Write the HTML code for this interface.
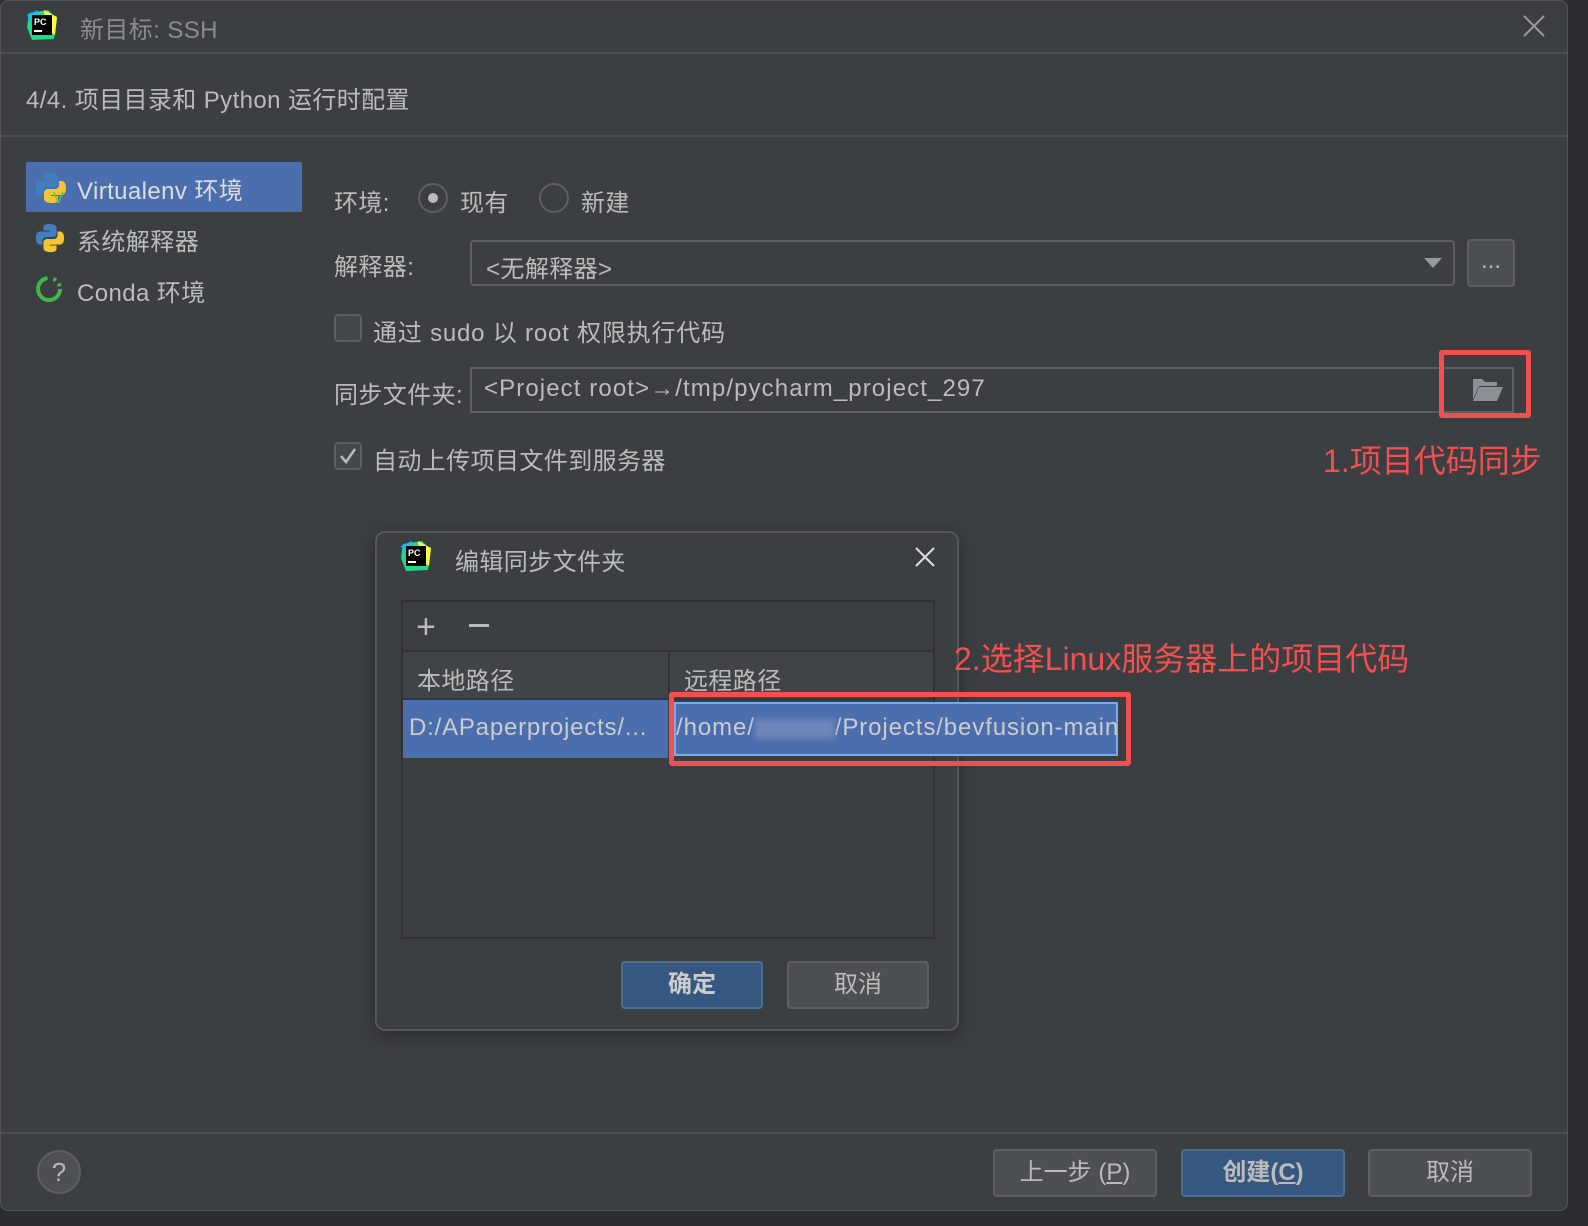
<!DOCTYPE html>
<html><head><meta charset="utf-8"><style>
*{margin:0;padding:0;box-sizing:border-box}
body{width:1588px;height:1226px;background:#2b2d30;font-family:"Liberation Sans","Noto Sans CJK SC",sans-serif;color:#bbbbbb;position:relative;overflow:hidden}
.a{position:absolute}
.win{left:0;top:0;width:1568px;height:1211px;background:#3c3f41;border:1px solid #555;border-radius:8px}
.t{font-size:24px;white-space:nowrap;letter-spacing:0.4px}
.btn{position:absolute;border:2px solid #5e6060;background:#4c5052;border-radius:4px;font-size:24px;text-align:center;color:#bbb}
</style></head><body>
<div class="a win"></div>
<svg class="a" style="left:26px;top:9px" width="32" height="32" viewBox="0 0 32 32"><polygon points="3,4 22,1 31,10 28,30 6,31 1,18" fill="#21d789"/><polygon points="18,1 31,8 29,26 20,20" fill="#fcf84a"/><polygon points="1,6 12,1 8,20" fill="#07c3f2"/><rect x="6" y="6" width="20" height="20" fill="#000"/><text x="8" y="16" font-size="9" font-weight="bold" fill="#fff" font-family="Liberation Sans">PC</text><rect x="8" y="21" width="8" height="2" fill="#fff"/></svg>
<div class="a t" style="left:80px;top:10px;color:#8a8c8e">新目标: SSH</div>
<svg class="a" style="left:1522px;top:14px" width="24" height="24"><path d="M2 2L22 22M22 2L2 22" stroke="#999" stroke-width="2"/></svg>
<div class="a" style="left:1px;top:52px;width:1566px;height:2px;background:#4b4e50"></div>
<div class="a t" style="left:26px;top:80px;color:#bbb">4/4. 项目目录和 Python 运行时配置</div>
<div class="a" style="left:1px;top:135px;width:1566px;height:2px;background:#4b4e50"></div>
<div class="a" style="left:26px;top:162px;width:276px;height:50px;background:#4b6eaf"></div>
<svg class="a" style="left:35px;top:172px" width="32" height="32" viewBox="0 0 32 32"><path d="M15 1c-6 0-6 3-6 3v4h7v1H5s-4 0-4 7 4 7 4 7h3v-4s0-4 4-4h7s4 0 4-4V5s0-4-8-4z" fill="#3f7fbd"/><path d="M17 31c6 0 6-3 6-3v-4h-7v-1h11s4 0 4-7-4-7-4-7h-3v4s0 4-4 4h-7s-4 0-4 4v6s0 4 8 4z" fill="#f2c531"/><text x="18" y="31" font-size="16" fill="#6cc24a" font-family="Liberation Sans">V</text></svg>
<div class="a t" style="left:77px;top:171px;color:#ddd">Virtualenv 环境</div>
<svg class="a" style="left:35px;top:223px" width="30" height="30" viewBox="0 0 32 32"><path d="M15 1c-6 0-6 3-6 3v4h7v1H5s-4 0-4 7 4 7 4 7h3v-4s0-4 4-4h7s4 0 4-4V5s0-4-8-4z" fill="#3f7fbd"/><path d="M17 31c6 0 6-3 6-3v-4h-7v-1h11s4 0 4-7-4-7-4-7h-3v4s0 4-4 4h-7s-4 0-4 4v6s0 4 8 4z" fill="#f2c531"/></svg>
<div class="a t" style="left:77px;top:222px">系统解释器</div>
<svg class="a" style="left:35px;top:275px" width="30" height="30"><circle cx="14" cy="14" r="11" fill="none" stroke="#44b549" stroke-width="4" stroke-dasharray="50 6 3 4 3 4"/></svg>
<div class="a t" style="left:77px;top:273px">Conda 环境</div>
<div class="a t" style="left:334px;top:183px">环境:</div>
<div class="a" style="left:418px;top:183px;width:30px;height:30px;border:2px solid #5e6060;border-radius:50%;background:#3c3f41"></div>
<div class="a" style="left:428px;top:193px;width:10px;height:10px;border-radius:50%;background:#bbb"></div>
<div class="a t" style="left:460px;top:183px">现有</div>
<div class="a" style="left:539px;top:183px;width:30px;height:30px;border:2px solid #5e6060;border-radius:50%"></div>
<div class="a t" style="left:581px;top:183px">新建</div>
<div class="a t" style="left:334px;top:247px">解释器:</div>
<div class="a" style="left:470px;top:240px;width:985px;height:46px;border:2px solid #5e6060;border-radius:4px"></div>
<div class="a t" style="left:486px;top:249px">&lt;无解释器&gt;</div>
<div class="a" style="left:1424px;top:258px;border-left:9px solid transparent;border-right:9px solid transparent;border-top:10px solid #999"></div>
<div class="btn" style="left:1467px;top:239px;width:48px;height:48px;line-height:40px">...</div>
<div class="a" style="left:334px;top:314px;width:28px;height:28px;border:2px solid #5e6060;border-radius:4px;background:#43494a"></div>
<div class="a t" style="left:373px;top:313px;letter-spacing:0.8px">通过 sudo 以 root 权限执行代码</div>
<div class="a t" style="left:334px;top:375px">同步文件夹:</div>
<div class="a" style="left:470px;top:367px;width:1044px;height:46px;border:2px solid #5e6060"></div>
<div class="a t" style="left:484px;top:375px;letter-spacing:1.1px">&lt;Project root&gt;→/tmp/pycharm_project_297</div>
<svg class="a" style="left:1471px;top:377px" width="32" height="26"><path d="M2 2h9l3 3h12v4H8L2 22z" fill="#8b9096"/><path d="M8 10h24l-6 14H2z" fill="#8b9096"/></svg>
<div class="a" style="left:1439px;top:350px;width:92px;height:68px;border:5px solid #f44f50;border-radius:3px"></div>
<div class="a" style="left:1323px;top:436px;font-size:32px;color:#f44f50;white-space:nowrap">1.项目代码同步</div>
<div class="a" style="left:334px;top:442px;width:28px;height:28px;border:2px solid #5e6060;border-radius:4px;background:#43494a"></div>
<svg class="a" style="left:338px;top:446px" width="20" height="20"><path d="M3 10l5 6L17 3" fill="none" stroke="#bbb" stroke-width="2.5"/></svg>
<div class="a t" style="left:373px;top:441px">自动上传项目文件到服务器</div>
<div class="a" style="left:375px;top:531px;width:584px;height:500px;background:#3c3f41;border:2px solid #55585a;border-radius:10px;box-shadow:0 4px 16px rgba(0,0,0,.35)"></div>
<svg class="a" style="left:400px;top:540px" width="32" height="32" viewBox="0 0 32 32"><polygon points="3,4 22,1 31,10 28,30 6,31 1,18" fill="#21d789"/><polygon points="18,1 31,8 29,26 20,20" fill="#fcf84a"/><polygon points="1,6 12,1 8,20" fill="#07c3f2"/><rect x="6" y="6" width="20" height="20" fill="#000"/><text x="8" y="16" font-size="9" font-weight="bold" fill="#fff" font-family="Liberation Sans">PC</text><rect x="8" y="21" width="8" height="2" fill="#fff"/></svg>
<div class="a t" style="left:455px;top:542px">编辑同步文件夹</div>
<svg class="a" style="left:914px;top:546px" width="22" height="22"><path d="M2 2L20 20M20 2L2 20" stroke="#ddd" stroke-width="2"/></svg>
<div class="a" style="left:401px;top:600px;width:534px;height:339px;border:2px solid #2f3133;background:#3c3f41"></div>
<div class="a" style="left:403px;top:650px;width:530px;height:2px;background:#323436"></div>
<div class="a" style="left:403px;top:652px;width:530px;height:46px;background:#414446"></div>
<div class="a" style="left:668px;top:652px;width:2px;height:46px;background:#323436"></div>
<div class="a" style="left:403px;top:698px;width:530px;height:2px;background:#323436"></div>
<div class="a" style="left:416px;top:608px;font-size:34px;color:#bbb">+</div>
<div class="a" style="left:469px;top:624px;width:20px;height:3px;background:#bbb"></div>
<div class="a t" style="left:417px;top:661px">本地路径</div>
<div class="a t" style="left:684px;top:661px">远程路径</div>
<div class="a" style="left:403px;top:700px;width:265px;height:58px;background:#4b6eaf"></div>
<div class="a t" style="left:409px;top:714px;color:#ccc;letter-spacing:0.8px">D:/APaperprojects/...</div>
<div class="a" style="left:674px;top:702px;width:444px;height:54px;border:2px solid #77aaef;background:#4b6eaf"></div>
<div class="a t" style="left:676px;top:714px;color:#ccc;letter-spacing:0.9px">/home/<span style="display:inline-block;width:80px;height:20px;background:#6e86b8;filter:blur(3px);vertical-align:middle"></span>/Projects/bevfusion-main</div>
<div class="a" style="left:669px;top:692px;width:462px;height:74px;border:5px solid #f44f50;border-radius:3px"></div>
<div class="a" style="left:954px;top:634px;font-size:32px;color:#f44f50;white-space:nowrap">2.选择Linux服务器上的项目代码</div>
<div class="btn" style="left:621px;top:961px;width:142px;height:48px;line-height:44px;background:#365880;border-color:#4c708c;font-weight:bold;color:#ccc">确定</div>
<div class="btn" style="left:787px;top:961px;width:142px;height:48px;line-height:44px">取消</div>
<div class="a" style="left:1px;top:1132px;width:1566px;height:2px;background:#4b4e50"></div>
<div class="a" style="left:37px;top:1150px;width:44px;height:44px;border:2px solid #5e6060;border-radius:50%;background:#4c5052;text-align:center;line-height:40px;font-size:26px">?</div>
<div class="btn" style="left:993px;top:1149px;width:164px;height:48px;line-height:44px">上一步 (<u>P</u>)</div>
<div class="btn" style="left:1181px;top:1149px;width:164px;height:48px;line-height:44px;background:#365880;border-color:#4c708c;font-weight:bold">创建(<u>C</u>)</div>
<div class="btn" style="left:1368px;top:1149px;width:164px;height:48px;line-height:44px">取消</div>
</body></html>
